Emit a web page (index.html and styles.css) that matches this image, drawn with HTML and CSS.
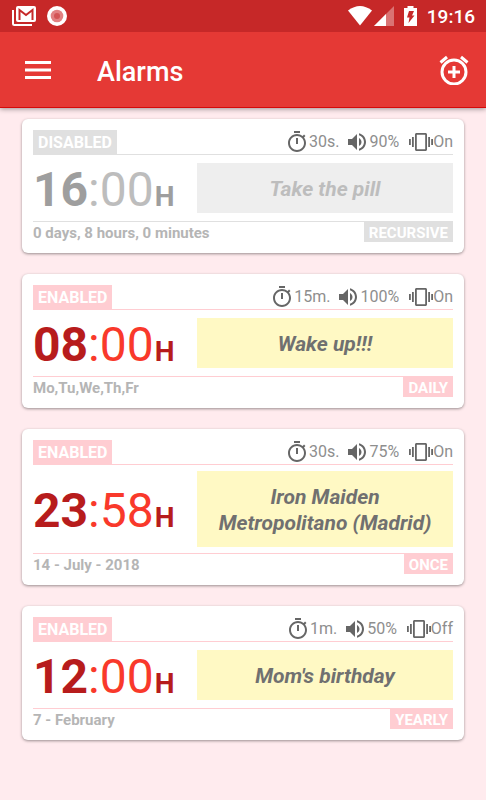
FILE: index.html
```html
<!DOCTYPE html>
<html lang="en">
<head>
<meta charset="utf-8">
<meta name="viewport" content="width=device-width, initial-scale=1">
<title>Alarms</title>
<link rel="stylesheet" href="styles.css">
</head>
<body>
<svg class="sprite" aria-hidden="true">
  <symbol id="timer" viewBox="0 0 24 24"><path d="M15 1H9v2h6V1zm-4 13h2V8h-2v6zm8.03-6.61l1.42-1.42c-.43-.51-.9-.99-1.41-1.41l-1.42 1.42C16.07 4.74 14.12 4 12 4c-4.97 0-9 4.03-9 9s4.02 9 9 9 9-4.03 9-9c0-2.12-.74-4.07-1.97-5.61zM12 20c-3.87 0-7-3.13-7-7s3.13-7 7-7 7 3.13 7 7-3.13 7-7 7z"/></symbol>
  <symbol id="volume" viewBox="0 0 24 24"><path d="M3 9v6h4l5 5V4L7 9H3zm13.5 3c0-1.77-1.02-3.29-2.5-4.03v8.05c1.48-.73 2.5-2.25 2.5-4.02zM14 3.23v2.06c2.89.86 5 3.54 5 6.71s-2.11 5.85-5 6.71v2.06c4.01-.91 7-4.49 7-8.77s-2.99-7.86-7-8.77z"/></symbol>
  <symbol id="vibration" viewBox="0 0 24 24"><path d="M0 15h1.800V9H0v6zm3 2h1.800V7H3v10zm19.200-8v6H24V9h-1.800zm-3 8H21V7h-1.800v10zM16.500 3h-9C6.670 3 6 3.670 6 4.500v15c0 .830.670 1.500 1.500 1.500h9c.830 0 1.500-.670 1.500-1.500v-15c0-.830-.670-1.500-1.500-1.500zM16.200 19.200H7.800V4.800h8.400v14.400z"/></symbol>
</svg>

<header class="top">
  <div class="statusbar">
    <div class="notifications">
      <svg width="24" height="20" viewBox="0 0 24 20" aria-hidden="true"><path d="M1 4v13.500q0 1.500 1.500 1.500H20" fill="none" stroke="#fff" stroke-width="2"/><rect x="4" y="0" width="20" height="16" rx="2" fill="#fff"/><path d="M7.500 14V4l6.500 5 6.500-5v10" fill="none" stroke="#c62828" stroke-width="2"/></svg>
      <svg width="20" height="20" viewBox="0 0 20 20" aria-hidden="true"><circle cx="10" cy="10" r="10" fill="#fff"/><circle cx="10" cy="10" r="6.300" fill="#e28182"/><circle cx="10" cy="10" r="3" fill="#d35455"/></svg>
    </div>
    <div class="system">
      <svg class="wifi" width="24" height="20" viewBox="0 0 24 20" aria-hidden="true"><path d="M0 4.500Q12-4.500 24 4.500L12 19.500z" fill="#fff"/></svg>
      <svg class="signal" width="20" height="20" viewBox="0 0 20 20" aria-hidden="true"><path d="M20 0v20H0z" fill="#fff" opacity=".35"/><path d="M12 8v12H0z" fill="#fff"/></svg>
      <svg class="battery" width="13" height="20" viewBox="0 0 13 20" aria-hidden="true"><path d="M3.500 0h6v2H13v18H0V2h3.500z" fill="#fff"/><path d="M5 5h5L8 9.500h2.500L4.500 17l1-5.500H3z" fill="#c62828"/></svg>
      <time>19:16</time>
    </div>
  </div>
  <div class="appbar">
    <button class="icon-button" type="button" aria-label="Menu"><svg width="26" height="18" viewBox="0 0 26 18"><path d="M0 0h26v3H0zM0 7.500h26v3H0zM0 15h26v3H0z" fill="#fff"/></svg></button>
    <h1>Alarms</h1>
    <button class="icon-button" type="button" aria-label="Add alarm"><svg width="30" height="30" viewBox="0 0 30 30" fill="none" stroke="#fff"><circle cx="15" cy="17" r="12" stroke-width="3"/><path d="M15 11v12M9 17h12M1.500 7.500L8 2M28.500 7.500L22 2" stroke-width="3"/></svg></button>
  </div>
</header>

<main class="alarms">
  <article class="card off">
    <div class="card-head">
      <span class="tag state">DISABLED</span>
      <ul class="settings">
        <li><svg><use href="#timer"/></svg>30s.</li>
        <li><svg><use href="#volume"/></svg>90%</li>
        <li class="vibrate"><svg><use href="#vibration"/></svg>On</li>
      </ul>
    </div>
    <div class="card-body">
      <time class="clock"><b>16</b>:00<small>H</small></time>
      <p class="note">Take the pill</p>
    </div>
    <div class="card-foot"><span class="when">0 days, 8 hours, 0 minutes</span><span class="tag">RECURSIVE</span></div>
  </article>

  <article class="card">
    <div class="card-head">
      <span class="tag state">ENABLED</span>
      <ul class="settings">
        <li><svg><use href="#timer"/></svg>15m.</li>
        <li><svg><use href="#volume"/></svg>100%</li>
        <li class="vibrate"><svg><use href="#vibration"/></svg>On</li>
      </ul>
    </div>
    <div class="card-body">
      <time class="clock"><b>08</b>:00<small>H</small></time>
      <p class="note">Wake up!!!</p>
    </div>
    <div class="card-foot"><span class="when">Mo,Tu,We,Th,Fr</span><span class="tag">DAILY</span></div>
  </article>

  <article class="card">
    <div class="card-head">
      <span class="tag state">ENABLED</span>
      <ul class="settings">
        <li><svg><use href="#timer"/></svg>30s.</li>
        <li><svg><use href="#volume"/></svg>75%</li>
        <li class="vibrate"><svg><use href="#vibration"/></svg>On</li>
      </ul>
    </div>
    <div class="card-body">
      <time class="clock"><b>23</b>:58<small>H</small></time>
      <p class="note">Iron Maiden<br>Metropolitano (Madrid)</p>
    </div>
    <div class="card-foot"><span class="when">14 - July - 2018</span><span class="tag">ONCE</span></div>
  </article>

  <article class="card">
    <div class="card-head">
      <span class="tag state">ENABLED</span>
      <ul class="settings">
        <li><svg><use href="#timer"/></svg>1m.</li>
        <li><svg><use href="#volume"/></svg>50%</li>
        <li class="vibrate"><svg><use href="#vibration"/></svg>Off</li>
      </ul>
    </div>
    <div class="card-body">
      <time class="clock"><b>12</b>:00<small>H</small></time>
      <p class="note">Mom's birthday</p>
    </div>
    <div class="card-foot"><span class="when">7 - February</span><span class="tag">YEARLY</span></div>
  </article>
</main>
</body>
</html>
```
FILE: styles.css
```css
* { box-sizing: border-box; }

body {
  margin: 0;
  min-height: 100vh;
  background: #ffebee;
  font-family: Roboto, "Liberation Sans", sans-serif;
}

h1, p, ul { margin: 0; padding: 0; }
svg { display: block; }
.sprite { display: none; }

.top {
  color: #fff;
  background: #e53935;
  border-bottom: 1px solid #d50a0a;
  box-shadow: 0 1px 5px rgba(0, 0, 0, .4);
}

.statusbar {
  display: flex;
  justify-content: space-between;
  align-items: center;
  height: 32px;
  padding: 0 11px 0 12px;
  background: #c62828;
}

.notifications, .system { display: flex; align-items: center; }
.notifications { gap: 11px; }
.system { font-size: 19px; font-weight: 500; }
.wifi { margin-right: 2px; }
.signal { margin-right: 10px; }
.battery { margin-right: 10px; }

.appbar {
  display: flex;
  align-items: center;
  height: 75px;
  padding: 0 17px 0 25px;
}

.icon-button {
  padding: 0;
  border: 0;
  background: none;
  cursor: pointer;
}

h1 {
  flex: 1;
  margin-left: 46px;
  padding-top: 4px;
  font-size: 27px;
  font-weight: 500;
  line-height: 32px;
}

.alarms {
  display: flex;
  flex-direction: column;
  gap: 21px;
  padding: 11px 22px;
}

.card {
  --line: #ffcdd2;
  --strong: #b71c1c;
  --light: #f9392b;
  --note: #fff9c4;
  --note-text: #707070;
  padding: 11px;
  border-radius: 6px;
  background: #fff;
  box-shadow: 0 1px 3px rgba(0, 0, 0, .4);
}

.off {
  --line: #e0e0e0;
  --strong: #9e9e9e;
  --light: #bdbdbd;
  --note: #eeeeee;
  --note-text: #bdbdbd;
}

.card-head, .card-foot { display: flex; justify-content: space-between; }
.card-head { border-bottom: 1px solid var(--line); }
.card-foot { border-top: 1px solid var(--line); }

.tag {
  padding: 2px 5px 0;
  background: var(--line);
  color: #fff;
  font-size: 15px;
  font-weight: 700;
  line-height: 18px;
}

.state { font-size: 16px; line-height: 22px; }

.settings {
  display: flex;
  gap: 6px;
  list-style: none;
  color: #8e8e8e;
  font-size: 16px;
  line-height: 24px;
}

.settings li { display: flex; }
.settings .vibrate { margin-left: 4px; }
.settings svg { width: 24px; height: 24px; fill: #666; }

.card-body {
  display: flex;
  align-items: center;
  padding: 6px 0;
}

.clock {
  flex: 0 0 164px;
  padding-top: 4px;
  color: var(--light);
  font-size: 48px;
  font-weight: 400;
  line-height: 50px;
}

.clock b, .clock small { color: var(--strong); font-weight: 700; }
.clock small { margin-left: 1px; font-size: 28px; line-height: 28px; }

.note {
  flex: 1;
  padding: 13px 8px 11px;
  background: var(--note);
  color: var(--note-text);
  font-size: 21px;
  font-style: italic;
  font-weight: 700;
  line-height: 26px;
  text-align: center;
}

.when {
  padding-top: 2px;
  color: #b5b5b5;
  font-size: 15px;
  font-weight: 700;
  line-height: 18px;
}
```
